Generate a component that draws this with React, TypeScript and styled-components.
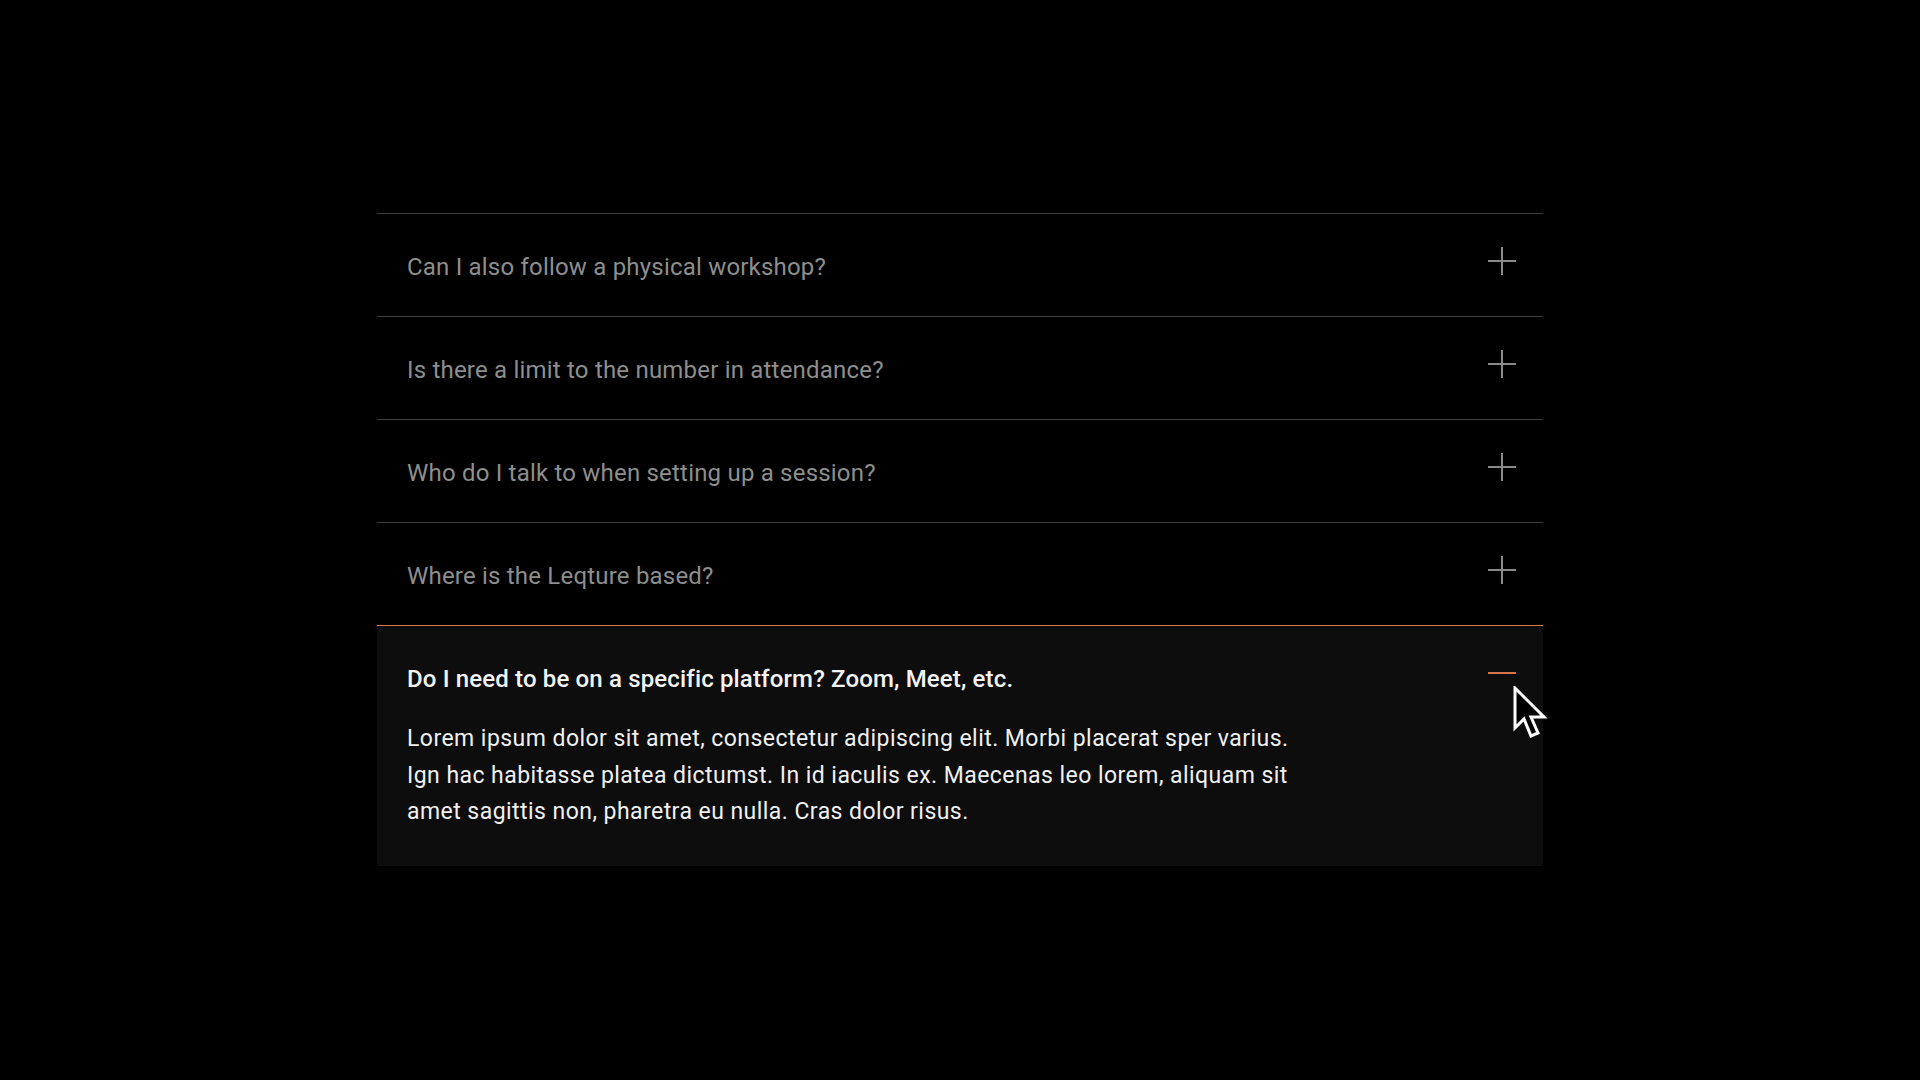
import React, { useState } from 'react'
import styled, { createGlobalStyle } from 'styled-components'

const GlobalStyle = createGlobalStyle`
  html, body {
    margin: 0;
    padding: 0;
    background: #000;
  }
  body {
    font-family: Roboto, "Liberation Sans", Arial, sans-serif;
    -webkit-font-smoothing: antialiased;
  }
`

const Page = styled.main`
  position: relative;
  min-height: 100vh;
  background: #000;
  padding-top: 213px;
  box-sizing: border-box;
`

const List = styled.div`
  width: 1166px;
  margin: 0 auto;
  display: flex;
  flex-direction: column;
`

const Item = styled.div<{ $open: boolean }>`
  border-top: 1px solid ${({ $open }) => ($open ? '#d7764b' : '#3e3e3e')};
  background: ${({ $open }) => ($open ? '#0d0d0d' : 'transparent')};
`

const Header = styled.button<{ $open: boolean }>`
  display: flex;
  align-items: center;
  justify-content: space-between;
  width: 100%;
  border: 0;
  background: none;
  cursor: pointer;
  text-align: left;
  padding: 39px 26px ${({ $open }) => ($open ? '28px' : '35px')} 30px;
  font: inherit;
`

const Question = styled.span<{ $open: boolean }>`
  font-size: 24px;
  line-height: 28px;
  font-weight: ${({ $open }) => ($open ? 500 : 400)};
  letter-spacing: ${({ $open }) => ($open ? '0.15px' : '0.2px')};
  color: ${({ $open }) => ($open ? '#f4f4f4' : '#8e8e8e')};
`

const Toggle = styled.span`
  display: flex;
  width: 30px;
  height: 30px;
  margin-top: -12px;
  flex-shrink: 0;
`

const Body = styled.p`
  margin: 0;
  padding: 0 30px 35px;
  max-width: 890px;
  font-size: 23px;
  line-height: 36.5px;
  letter-spacing: 0.45px;
  color: #f0f0f0;
`

const Cursor = styled.svg`
  position: absolute;
  left: 1513px;
  top: 686px;
  pointer-events: none;
`

const faqs = [
  { q: 'Can I also follow a physical workshop?', a: '' },
  { q: 'Is there a limit to the number in attendance?', a: '' },
  { q: 'Who do I talk to when setting up a session?', a: '' },
  { q: 'Where is the Leqture based?', a: '' },
  {
    q: 'Do I need to be on a specific platform? Zoom, Meet, etc.',
    a: 'Lorem ipsum dolor sit amet, consectetur adipiscing elit. Morbi placerat sper varius. Ign hac habitasse platea dictumst. In id iaculis ex. Maecenas leo lorem, aliquam sit amet sagittis non, pharetra eu nulla. Cras dolor risus.',
  },
]

function PlusMinus({ open }: { open: boolean }) {
  return (
    <svg width="30" height="30" viewBox="0 0 30 30">
      {open ? (
        <line x1="1" y1="15" x2="29" y2="15" stroke="#d7764b" strokeWidth="2" />
      ) : (
        <>
          <line x1="1" y1="15" x2="29" y2="15" stroke="#8a8a8a" strokeWidth="2" />
          <line x1="15" y1="1" x2="15" y2="29" stroke="#8a8a8a" strokeWidth="2" />
        </>
      )}
    </svg>
  )
}

export default function App() {
  const [openIndex, setOpenIndex] = useState<number | null>(4)

  return (
    <>
      <GlobalStyle />
      <Page>
        <List>
          {faqs.map((f, i) => {
            const open = openIndex === i
            return (
              <Item key={f.q} $open={open}>
                <Header $open={open} onClick={() => setOpenIndex(open ? null : i)}>
                  <Question $open={open}>{f.q}</Question>
                  <Toggle>
                    <PlusMinus open={open} />
                  </Toggle>
                </Header>
                {open && f.a && <Body>{f.a}</Body>}
              </Item>
            )
          })}
        </List>
        <Cursor width="36" height="54" viewBox="0 0 36 54">
          <path
            d="M2 2 L2 42 L11 33 L18 50 L25 47 L18 31 L31 31 Z"
            fill="#000"
            stroke="#fff"
            strokeWidth="3"
            strokeLinejoin="miter"
          />
        </Cursor>
      </Page>
    </>
  )
}
